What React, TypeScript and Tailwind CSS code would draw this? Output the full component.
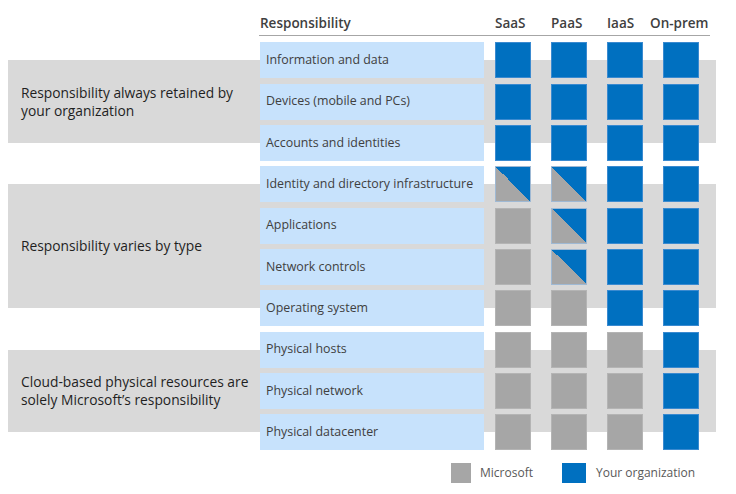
import React from "react";

type Cell = "me" | "ms" | "split";

type Row = { label: string; cells: Cell[] };

type Group = { title: string[]; rows: Row[] };

const groups: Group[] = [
  {
    title: ["Responsibility always retained by", "your organization"],
    rows: [
      { label: "Information and data", cells: ["me", "me", "me", "me"] },
      { label: "Devices (mobile and PCs)", cells: ["me", "me", "me", "me"] },
      { label: "Accounts and identities", cells: ["me", "me", "me", "me"] },
    ],
  },
  {
    title: ["Responsibility varies by type"],
    rows: [
      { label: "Identity and directory infrastructure", cells: ["split", "split", "me", "me"] },
      { label: "Applications", cells: ["ms", "split", "me", "me"] },
      { label: "Network controls", cells: ["ms", "split", "me", "me"] },
      { label: "Operating system", cells: ["ms", "ms", "me", "me"] },
    ],
  },
  {
    title: ["Cloud-based physical resources are", "solely Microsoft\u2019s responsibility"],
    rows: [
      { label: "Physical hosts", cells: ["ms", "ms", "ms", "me"] },
      { label: "Physical network", cells: ["ms", "ms", "ms", "me"] },
      { label: "Physical datacenter", cells: ["ms", "ms", "ms", "me"] },
    ],
  },
];

function Square({ kind }: { kind: Cell }) {
  if (kind === "me") {
    return <div className="w-[36px] h-[36px] bg-[#0070c0] border border-[#3a8ad0]" />;
  }
  if (kind === "ms") {
    return <div className="w-[36px] h-[36px] bg-[#a6a6a6] border border-[#b4b4b4]" />;
  }
  // shared: grey bottom-left, blue top-right
  return (
    <div className="w-[36px] h-[36px] border border-[#9fb9d4] bg-[linear-gradient(to_top_right,#a6a6a6_50%,#0070c0_50%)]" />
  );
}

export default function App() {
  return (
    <div
      className="w-[736px] h-[494px] bg-white pt-[13px] text-[#404040]"
      style={{ fontFamily: '"Open Sans", "Noto Sans", sans-serif' }}
    >
      {/* Column headers */}
      <div className="ml-[259px] w-[451px] flex items-end border-b border-[#a6a6a6] pb-[2px] text-[13.5px] font-semibold">
        <div className="w-[236px] pl-[1px]">Responsibility</div>
        <div className="w-[56px]">SaaS</div>
        <div className="w-[56px]">PaaS</div>
        <div className="w-[43px]">IaaS</div>
        <div>On-prem</div>
      </div>

      {/* Groups */}
      <div className="mt-[6px] flex flex-col gap-[5.33px]">
        {groups.map((g) => (
          <div key={g.title[0]} className="flex">
            <div className="ml-[8px] w-[708px] my-[18px] bg-[#d9d9d9] flex">
              <div className="w-[252px] pl-[13px] flex flex-col justify-center text-[13.8px] leading-[18px] text-[#1f1f1f]">
                {g.title.map((t) => (
                  <div key={t}>{t}</div>
                ))}
              </div>
              <div className="-my-[18px] flex flex-col gap-[5.33px]">
                {g.rows.map((r) => (
                  <div key={r.label} className="flex h-[36px]">
                    <div className="w-[224px] bg-[#c7e2fc] pl-[6px] flex items-center text-[12.4px]">
                      {r.label}
                    </div>
                    <div className="ml-[11px] flex gap-[20px]">
                      {r.cells.map((c, i) => (
                        <Square key={i} kind={c} />
                      ))}
                    </div>
                  </div>
                ))}
              </div>
            </div>
          </div>
        ))}
      </div>

      {/* Legend */}
      <div className="mt-[13px] ml-[451px] flex items-center text-[12px] text-[#595959]">
        <div className="w-[20px] h-[20px] bg-[#a6a6a6]" />
        <span className="ml-[9px]">Microsoft</span>
        <div className="ml-[29px] w-[24px] h-[20px] bg-[#0070c0]" />
        <span className="ml-[10px]">Your organization</span>
      </div>
    </div>
  );
}
